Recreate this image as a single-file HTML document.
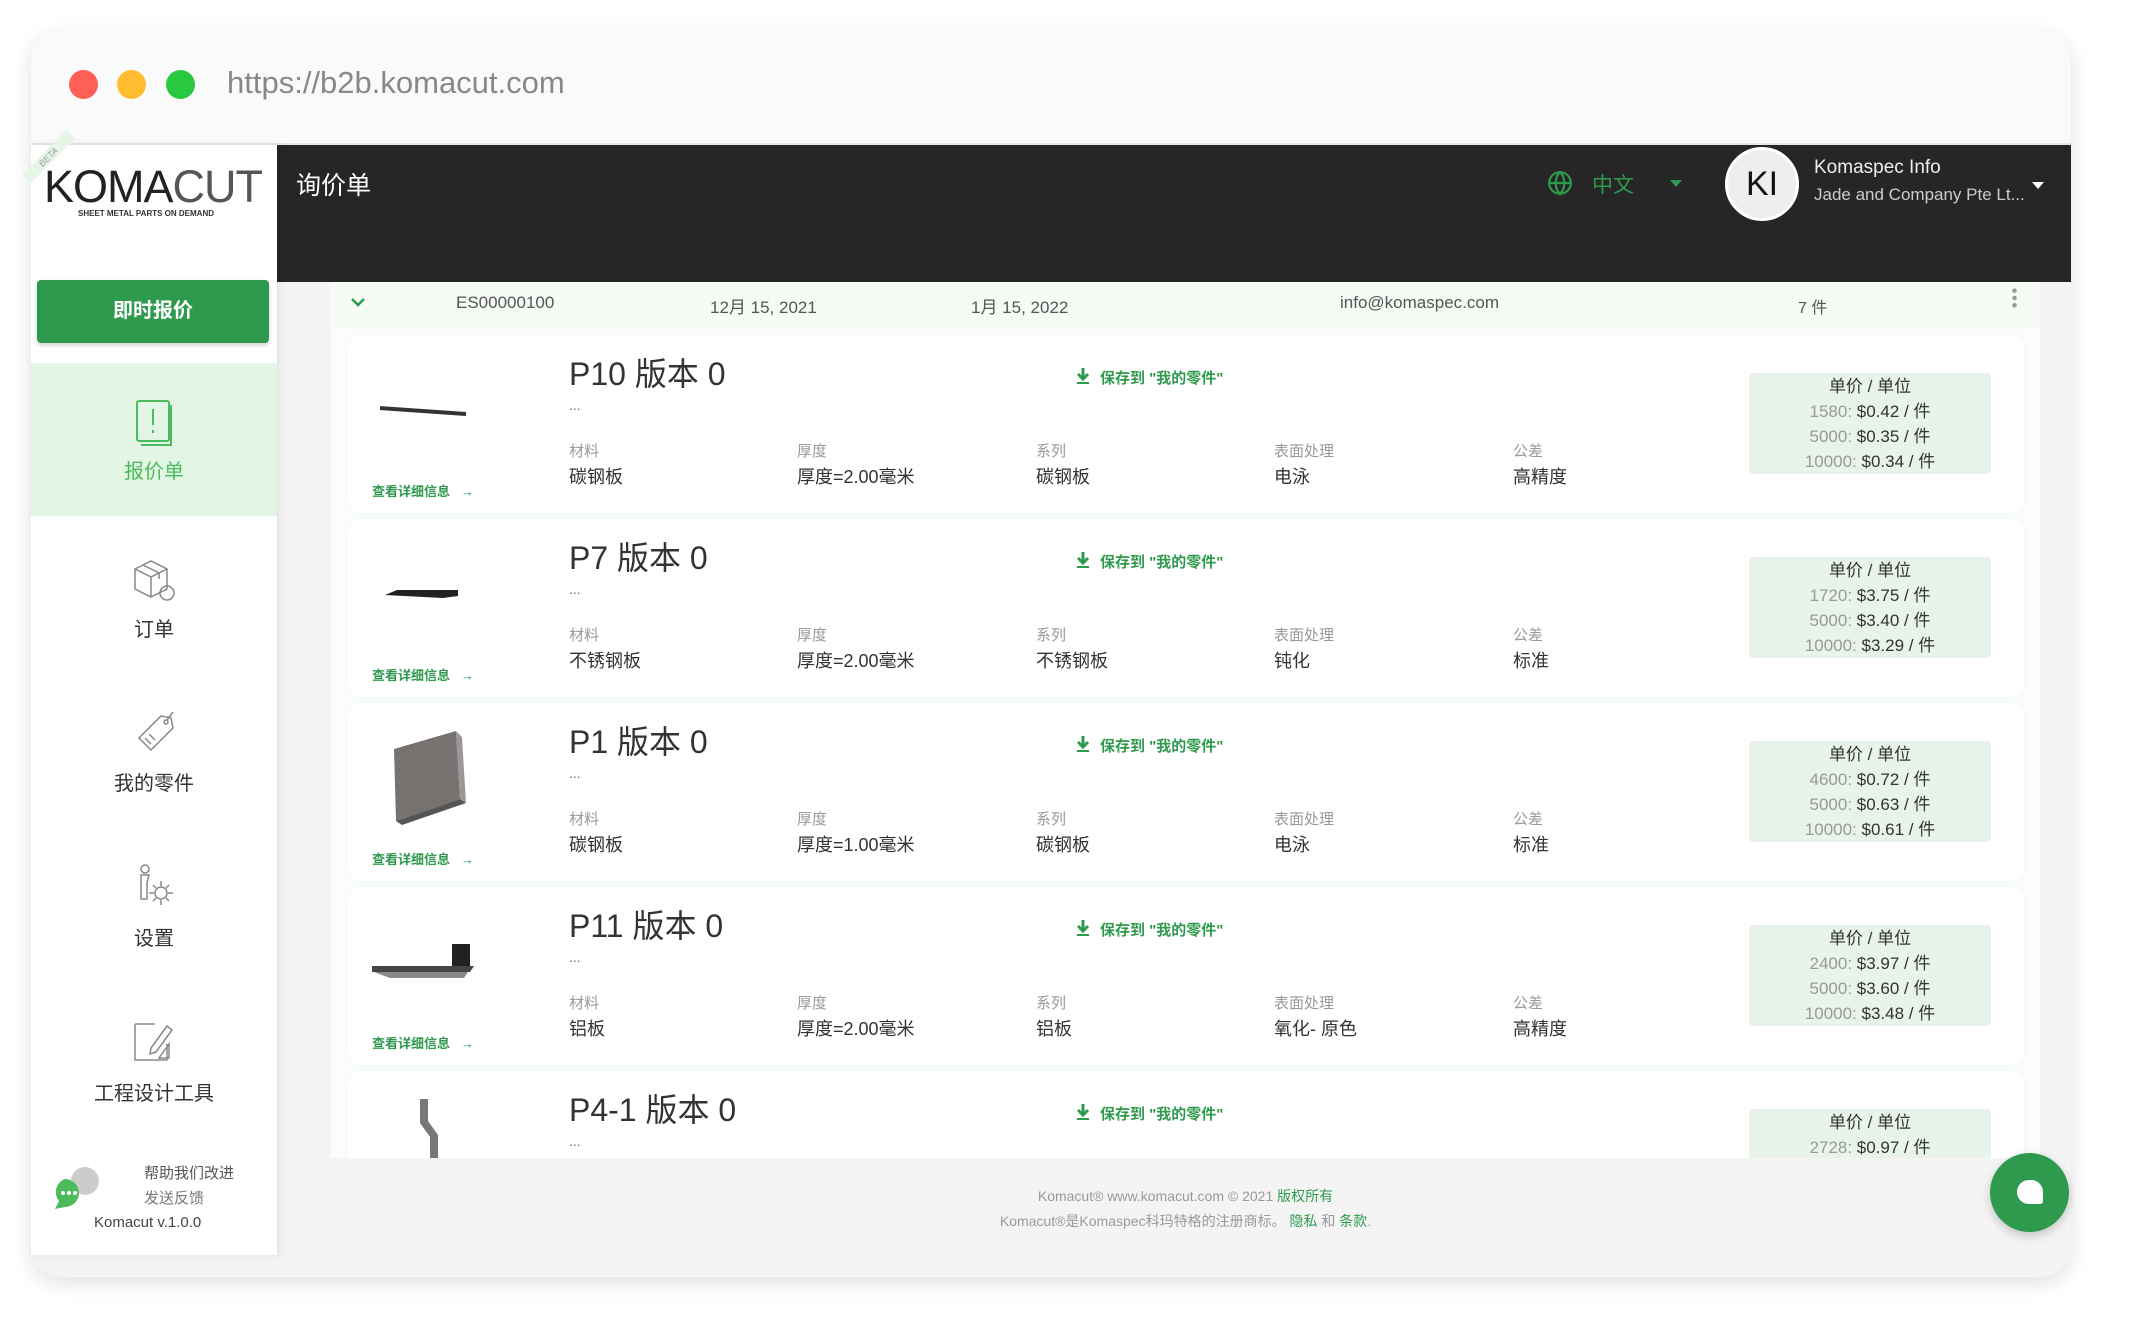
<!DOCTYPE html>
<html><head><meta charset="utf-8"><style>
*{box-sizing:border-box;margin:0;padding:0}
body{width:2142px;height:1340px;background:#fff;font-family:"Liberation Sans","Noto Sans CJK SC",sans-serif;position:relative;overflow:hidden}
.abs{position:absolute}
.win{left:31px;top:30px;width:2040px;height:1247px;border-radius:30px;background:#f4f4f4;box-shadow:0 6px 20px rgba(0,0,0,.12);overflow:hidden}
.chrome{left:0;top:0;width:2040px;height:115px;background:#fafafa;border-bottom:2px solid #e6e6e6}
.dot{width:29px;height:29px;border-radius:50%;top:40px}
.sidebar{left:31px;top:145px;width:246px;height:1110px;background:#fff;box-shadow:3px 0 8px rgba(0,0,0,.08);z-index:3}
.header{left:277px;top:145px;width:1794px;height:137px;background:#262626}
.nav{position:absolute;left:0;width:246px;text-align:center;font-size:20px;color:#333}
.panel{left:331px;top:282px;width:1709px;height:876px;background:#fafdfa;overflow:hidden}
.card{position:absolute;left:17px;width:1676px;height:178px;background:#fff;border-radius:14px;box-shadow:0 0 6px rgba(120,180,120,.08)}
.title{position:absolute;left:221px;top:14px;font-size:32px;color:#333}
.dots{position:absolute;left:221px;top:62px;font-size:14px;color:#666}
.lab{position:absolute;top:105px;font-size:15px;color:#999}
.val{position:absolute;top:128px;font-size:18px;color:#333}
.detail{position:absolute;left:24px;top:146px;font-size:13px;font-weight:bold;color:#2e9a4e}
.save{position:absolute;left:752px;top:32px;font-size:15px;font-weight:bold;color:#2e9a4e}
.dl{position:absolute;left:728px;top:32px}
.price{position:absolute;left:1401px;top:38px;width:242px;height:101px;background:#e8f3ea;border-radius:4px;text-align:center;font-size:17px;color:#333;line-height:25px;padding-top:1px}
.price span{color:#999}
</style></head><body>
<div class="abs win">
 <div class="abs chrome">
  <div class="abs dot" style="left:38px;background:#fe5f57"></div>
  <div class="abs dot" style="left:86px;background:#febc2e"></div>
  <div class="abs dot" style="left:135px;background:#28c840"></div>
  <div class="abs" style="left:196px;top:35px;font-size:31px;color:#888">https://b2b.komacut.com</div>
 </div>
</div>
<div class="abs header">
 <div class="abs" style="left:19px;top:21px;font-size:25px;color:#fff">询价单</div>
 <svg class="abs" style="left:1270px;top:25px" width="26" height="26" viewBox="0 0 24 24" fill="none" stroke="#2e9a4e" stroke-width="2"><circle cx="12" cy="12" r="10"/><path d="M2 12h20M12 2c3 3 4 7 4 10s-1 7-4 10c-3-3-4-7-4-10s1-7 4-10z"/></svg>
 <div class="abs" style="left:1315px;top:24px;font-size:21px;color:#2e9a4e">中文</div>
 <div class="abs" style="left:1393px;top:35px;width:0;height:0;border-left:6px solid transparent;border-right:6px solid transparent;border-top:7px solid #2e9a4e"></div>
 <div class="abs" style="left:1448px;top:2px;width:74px;height:74px;border-radius:50%;background:#eee;border:3px solid #fff;text-align:center;line-height:68px;font-size:34px;color:#111">KI</div>
 <div class="abs" style="left:1537px;top:12px;font-size:19px;color:#eee">Komaspec Info</div>
 <div class="abs" style="left:1537px;top:40px;font-size:17px;color:#ccc">Jade and Company Pte Lt...</div>
 <div class="abs" style="left:1755px;top:37px;width:0;height:0;border-left:6px solid transparent;border-right:6px solid transparent;border-top:7px solid #fff"></div>
</div>
<div class="abs sidebar">
 <div class="abs" style="left:-14px;top:6px;transform:rotate(-45deg);font-size:9px;color:#999;background:#e5f5e8;padding:1px 20px;font-style:italic">BETA</div>
 <div class="abs" style="left:13px;top:16px;font-size:45px;color:#222;letter-spacing:-1px">KOMA<span style="color:#555">CUT</span></div>
 <div class="abs" style="left:47px;top:64px;font-size:8px;color:#333;font-weight:bold">SHEET METAL PARTS ON DEMAND</div>
 <div class="abs" style="left:6px;top:135px;width:232px;height:63px;background:#2e9a4e;border-radius:4px;box-shadow:0 2px 4px rgba(0,0,0,.2);color:#fff;font-weight:bold;font-size:20px;text-align:center;line-height:63px">即时报价</div>
 <div class="abs" style="left:0;top:218px;width:246px;height:153px;background:#e3f6e5"></div>
 <svg class="abs" style="left:104px;top:254px" width="40" height="48" viewBox="0 0 40 48" fill="none" stroke="#4cbb5c" stroke-width="2"><rect x="2" y="2" width="32" height="40" rx="2"/><path d="M36 6v40H6"/><path d="M18 10v16M18 31v3"/></svg>
 <div class="nav" style="top:310px;color:#4cbb5c">报价单</div>
 <svg class="abs" style="left:100px;top:412px" width="46" height="46" viewBox="0 0 46 46" fill="none" stroke="#888" stroke-width="1.5"><path d="M4 12l16-8 16 8v20l-16 8-16-8z"/><path d="M4 12l16 8 16-8M20 20v20M12 8l16 8v6"/><circle cx="36" cy="36" r="7"/></svg>
 <div class="nav" style="top:468px">订单</div>
 <svg class="abs" style="left:100px;top:565px" width="46" height="46" viewBox="0 0 46 46" fill="none" stroke="#888" stroke-width="1.5"><path d="M30 6l10 2 2 10-22 22-12-12z"/><circle cx="35" cy="12" r="2"/><path d="M36 10l6-8M14 28l6 6M18 24l6 6"/></svg>
 <div class="nav" style="top:622px">我的零件</div>
 <svg class="abs" style="left:100px;top:718px" width="46" height="50" viewBox="0 0 46 50" fill="none" stroke="#888" stroke-width="1.5"><circle cx="14" cy="6" r="4"/><path d="M10 12h8l-2 8v16h-6z"/><circle cx="30" cy="30" r="6"/><path d="M30 18v5M30 37v5M18 30h5M37 30h5M22 22l3 3M35 35l3 3M38 22l-3 3M25 35l-3 3"/></svg>
 <div class="nav" style="top:777px">设置</div>
 <svg class="abs" style="left:100px;top:873px" width="46" height="48" viewBox="0 0 46 48" fill="none" stroke="#888" stroke-width="1.5"><path d="M4 6h20M4 6v36h32V26"/><path d="M20 30l16-22 5 4-16 22-6 2z"/><path d="M28 40l10-14v14z"/></svg>
 <div class="nav" style="top:932px">工程设计工具</div>
 <svg class="abs" style="left:20px;top:1020px" width="52" height="44" viewBox="0 0 52 44"><circle cx="34" cy="16" r="14" fill="#ccc"/><path d="M14 14a14 14 0 1 1 0 28l-10 2 4-8a14 14 0 0 1 6-22z" fill="#4cbb5c"/><circle cx="12" cy="28" r="2" fill="#fff"/><circle cx="18" cy="28" r="2" fill="#fff"/><circle cx="24" cy="28" r="2" fill="#fff"/></svg>
 <div class="abs" style="left:113px;top:1017px;font-size:15px;color:#555">帮助我们改进</div>
 <div class="abs" style="left:113px;top:1042px;font-size:15px;color:#777">发送反馈</div>
 <div class="abs" style="left:63px;top:1069px;font-size:15px;color:#444">Komacut v.1.0.0</div>
</div>
<div class="abs panel">
 <div class="abs" style="left:0;top:0;width:1709px;height:46px;background:#f6fbf6"></div>
 <svg class="abs" style="left:20px;top:15px" width="14" height="10" viewBox="0 0 14 10"><path d="M1 2l6 6 6-6" stroke="#2e9a4e" stroke-width="2.5" fill="none"/></svg>
 <div class="abs" style="left:125px;top:11px;font-size:17px;color:#555">ES00000100</div>
 <div class="abs" style="left:379px;top:11px;font-size:17px;color:#555">12月 15, 2021</div>
 <div class="abs" style="left:640px;top:11px;font-size:17px;color:#555">1月 15, 2022</div>
 <div class="abs" style="left:1009px;top:11px;font-size:17px;color:#555">info@komaspec.com</div>
 <div class="abs" style="left:1467px;top:12px;font-size:16px;color:#555">7 件</div>
 <div class="abs" style="left:1681px;top:5px;width:5px;height:22px;background:radial-gradient(circle,#999 2px,transparent 2.5px) 0 0/5px 7.3px"></div>

 <div class="card" style="top:53px">
  <svg class="abs" style="left:30px;top:70px" width="90" height="12"><path d="M2 3L88 9" stroke="#333" stroke-width="4"/></svg>
  <div class="title">P10 版本 0</div><div class="dots">...</div>
  <div class="lab" style="left:221px">材料</div><div class="val" style="left:221px">碳钢板</div>
  <div class="lab" style="left:449px">厚度</div><div class="val" style="left:449px">厚度=2.00毫米</div>
  <div class="lab" style="left:688px">系列</div><div class="val" style="left:688px">碳钢板</div>
  <div class="lab" style="left:926px">表面处理</div><div class="val" style="left:926px">电泳</div>
  <div class="lab" style="left:1165px">公差</div><div class="val" style="left:1165px">高精度</div>
  <div class="detail">查看详细信息 &nbsp;&nbsp;→</div>
  <svg class="dl" width="14" height="18" viewBox="0 0 14 18"><path d="M7 1v10M2 7l5 5 5-5" stroke="#2e9a4e" stroke-width="3" fill="none"/><path d="M1 16h12" stroke="#2e9a4e" stroke-width="2"/></svg>
  <div class="save">保存到 "我的零件"</div>
  <div class="price">单价 / 单位<br><span>1580:</span> $0.42 / 件<br><span>5000:</span> $0.35 / 件<br><span>10000:</span> $0.34 / 件</div>
 </div>
 <div class="card" style="top:237px">
  <svg class="abs" style="left:35px;top:68px" width="80" height="14"><path d="M2 8L14 3H75V9L60 11Z" fill="#222"/></svg>
  <div class="title">P7 版本 0</div><div class="dots">...</div>
  <div class="lab" style="left:221px">材料</div><div class="val" style="left:221px">不锈钢板</div>
  <div class="lab" style="left:449px">厚度</div><div class="val" style="left:449px">厚度=2.00毫米</div>
  <div class="lab" style="left:688px">系列</div><div class="val" style="left:688px">不锈钢板</div>
  <div class="lab" style="left:926px">表面处理</div><div class="val" style="left:926px">钝化</div>
  <div class="lab" style="left:1165px">公差</div><div class="val" style="left:1165px">标准</div>
  <div class="detail">查看详细信息 &nbsp;&nbsp;→</div>
  <svg class="dl" width="14" height="18" viewBox="0 0 14 18"><path d="M7 1v10M2 7l5 5 5-5" stroke="#2e9a4e" stroke-width="3" fill="none"/><path d="M1 16h12" stroke="#2e9a4e" stroke-width="2"/></svg>
  <div class="save">保存到 "我的零件"</div>
  <div class="price">单价 / 单位<br><span>1720:</span> $3.75 / 件<br><span>5000:</span> $3.40 / 件<br><span>10000:</span> $3.29 / 件</div>
 </div>
 <div class="card" style="top:421px">
  <svg class="abs" style="left:40px;top:26px" width="90" height="96"><path d="M6 20L68 2L72 70L8 92Z" fill="#77716f"/><path d="M68 2L74 8L78 74L72 70Z" fill="#999"/><path d="M8 92L72 70L78 74L14 96Z" fill="#555"/></svg>
  <div class="title">P1 版本 0</div><div class="dots">...</div>
  <div class="lab" style="left:221px">材料</div><div class="val" style="left:221px">碳钢板</div>
  <div class="lab" style="left:449px">厚度</div><div class="val" style="left:449px">厚度=1.00毫米</div>
  <div class="lab" style="left:688px">系列</div><div class="val" style="left:688px">碳钢板</div>
  <div class="lab" style="left:926px">表面处理</div><div class="val" style="left:926px">电泳</div>
  <div class="lab" style="left:1165px">公差</div><div class="val" style="left:1165px">标准</div>
  <div class="detail">查看详细信息 &nbsp;&nbsp;→</div>
  <svg class="dl" width="14" height="18" viewBox="0 0 14 18"><path d="M7 1v10M2 7l5 5 5-5" stroke="#2e9a4e" stroke-width="3" fill="none"/><path d="M1 16h12" stroke="#2e9a4e" stroke-width="2"/></svg>
  <div class="save">保存到 "我的零件"</div>
  <div class="price">单价 / 单位<br><span>4600:</span> $0.72 / 件<br><span>5000:</span> $0.63 / 件<br><span>10000:</span> $0.61 / 件</div>
 </div>
 <div class="card" style="top:605px">
  <svg class="abs" style="left:22px;top:55px" width="110" height="40"><path d="M82 2h18v22H82z" fill="#222"/><path d="M2 24H104L100 30H2z" fill="#444"/><path d="M4 30H98L94 36H20z" fill="#888"/></svg>
  <div class="title">P11 版本 0</div><div class="dots">...</div>
  <div class="lab" style="left:221px">材料</div><div class="val" style="left:221px">铝板</div>
  <div class="lab" style="left:449px">厚度</div><div class="val" style="left:449px">厚度=2.00毫米</div>
  <div class="lab" style="left:688px">系列</div><div class="val" style="left:688px">铝板</div>
  <div class="lab" style="left:926px">表面处理</div><div class="val" style="left:926px">氧化- 原色</div>
  <div class="lab" style="left:1165px">公差</div><div class="val" style="left:1165px">高精度</div>
  <div class="detail">查看详细信息 &nbsp;&nbsp;→</div>
  <svg class="dl" width="14" height="18" viewBox="0 0 14 18"><path d="M7 1v10M2 7l5 5 5-5" stroke="#2e9a4e" stroke-width="3" fill="none"/><path d="M1 16h12" stroke="#2e9a4e" stroke-width="2"/></svg>
  <div class="save">保存到 "我的零件"</div>
  <div class="price">单价 / 单位<br><span>2400:</span> $3.97 / 件<br><span>5000:</span> $3.60 / 件<br><span>10000:</span> $3.48 / 件</div>
 </div>
 <div class="card" style="top:789px">
  <svg class="abs" style="left:68px;top:26px" width="30" height="70"><path d="M4 2h8v22l10 14v32h-8V40L4 26z" fill="#777"/></svg>
  <div class="title">P4-1 版本 0</div><div class="dots">...</div>
  <svg class="dl" width="14" height="18" viewBox="0 0 14 18"><path d="M7 1v10M2 7l5 5 5-5" stroke="#2e9a4e" stroke-width="3" fill="none"/><path d="M1 16h12" stroke="#2e9a4e" stroke-width="2"/></svg>
  <div class="save">保存到 "我的零件"</div>
  <div class="price" style="height:140px">单价 / 单位<br><span>2728:</span> $0.97 / 件</div>
 </div>
</div>
<div class="abs" style="left:331px;top:1184px;width:1709px;text-align:center;font-size:14px;color:#999;line-height:25px">Komacut® www.komacut.com © 2021 <span style="color:#2e9a4e">版权所有</span><br>Komacut®是Komaspec科玛特格的注册商标。 <span style="color:#2e9a4e">隐私</span> 和 <span style="color:#2e9a4e">条款</span>.</div>
<div class="abs" style="left:1990px;top:1153px;width:79px;height:79px;border-radius:50%;background:#2e9a4e;box-shadow:0 4px 10px rgba(0,0,0,.2)"></div>
<div class="abs" style="left:2017px;top:1180px;width:26px;height:24px;background:#fff;border-radius:13px 13px 3px 13px"></div>
</body></html>
